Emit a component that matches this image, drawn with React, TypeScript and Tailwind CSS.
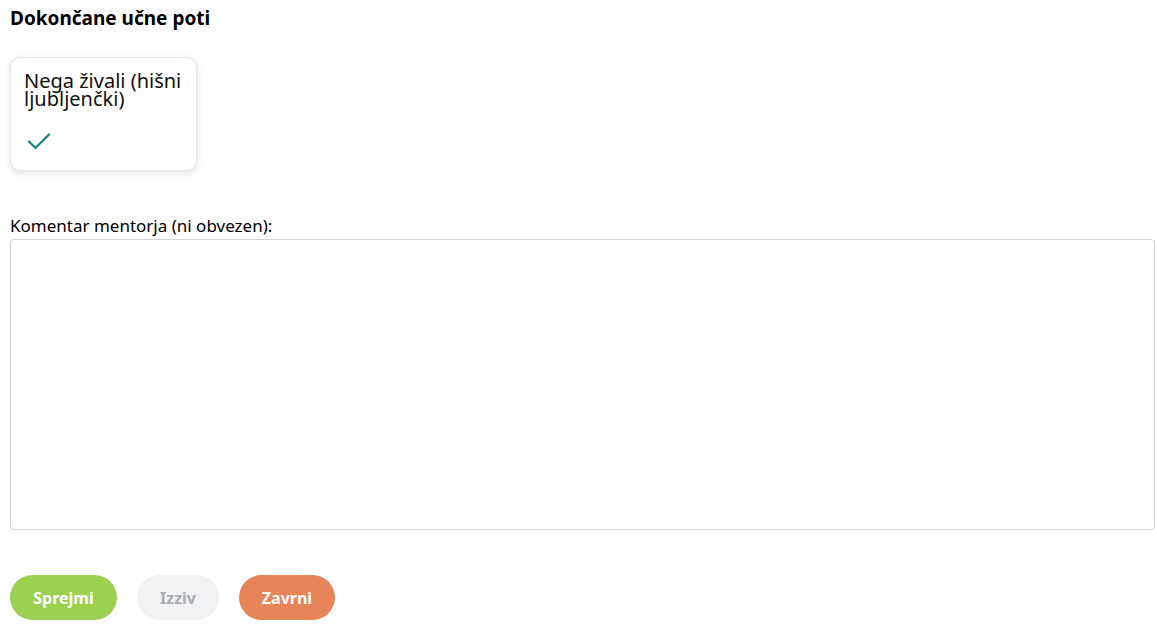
export default function App() {
  return (
    <div className="min-h-screen bg-white pl-[10px] pr-[2px] pt-[5px] font-['Noto_Sans',sans-serif] text-black">
      <h2 className="text-[19px] font-bold leading-[26px]">Dokončane učne poti</h2>

      <div className="mt-[26px] flex">
        <div className="flex h-[114px] w-[187px] flex-col rounded-[10px] border border-[#e5e7eb] bg-white px-[13px] pt-[14px] shadow-[0_2px_6px_rgba(0,0,0,0.12)]">
          <div className="text-[20px] leading-[18px] text-[#111]">Nega živali (hišni ljubljenčki)</div>
          <svg
            className="mt-[24px] ml-[3px] h-[19px] w-[24px]"
            viewBox="0 0 24 19"
            fill="none"
            stroke="#14857c"
            strokeWidth={2.2}
            strokeLinecap="round"
            strokeLinejoin="round"
          >
            <path d="M2 9.5l6.5 6.5L22 2.5" />
          </svg>
        </div>
      </div>

      <label className="mt-[44px] block text-[17px] leading-[22px]">
        Komentar mentorja (ni obvezen):
      </label>
      <textarea className="mt-[2px] block h-[291px] w-full resize-none rounded-[4px] border border-[#d4d4d8] bg-white p-2 outline-none" />

      <div className="mt-[45px] flex gap-[20px]">
        <button className="h-[45px] w-[107px] rounded-full bg-[#9bd150] text-[16px] font-bold text-white">
          Sprejmi
        </button>
        <button className="h-[45px] w-[82px] rounded-full bg-[#f1f2f4] text-[16px] font-bold text-[#a9aeb6]">
          Izziv
        </button>
        <button className="h-[45px] w-[96px] rounded-full bg-[#e8845a] text-[16px] font-bold text-white">
          Zavrni
        </button>
      </div>
    </div>
  );
}
